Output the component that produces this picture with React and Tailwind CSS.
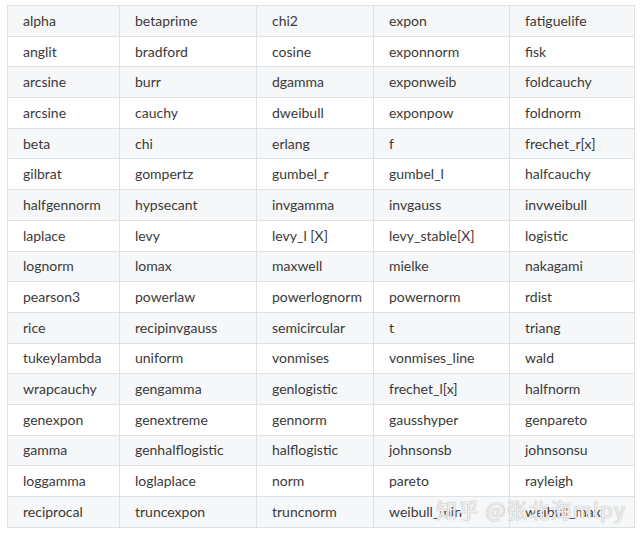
const rows = [
  ['alpha', 'betaprime', 'chi2', 'expon', 'fatiguelife'],
  ['anglit', 'bradford', 'cosine', 'exponnorm', 'fisk'],
  ['arcsine', 'burr', 'dgamma', 'exponweib', 'foldcauchy'],
  ['arcsine', 'cauchy', 'dweibull', 'exponpow', 'foldnorm'],
  ['beta', 'chi', 'erlang', 'f', 'frechet_r[x]'],
  ['gilbrat', 'gompertz', 'gumbel_r', 'gumbel_l', 'halfcauchy'],
  ['halfgennorm', 'hypsecant', 'invgamma', 'invgauss', 'invweibull'],
  ['laplace', 'levy', 'levy_l [X]', 'levy_stable[X]', 'logistic'],
  ['lognorm', 'lomax', 'maxwell', 'mielke', 'nakagami'],
  ['pearson3', 'powerlaw', 'powerlognorm', 'powernorm', 'rdist'],
  ['rice', 'recipinvgauss', 'semicircular', 't', 'triang'],
  ['tukeylambda', 'uniform', 'vonmises', 'vonmises_line', 'wald'],
  ['wrapcauchy', 'gengamma', 'genlogistic', 'frechet_l[x]', 'halfnorm'],
  ['genexpon', 'genextreme', 'gennorm', 'gausshyper', 'genpareto'],
  ['gamma', 'genhalflogistic', 'halflogistic', 'johnsonsb', 'johnsonsu'],
  ['loggamma', 'loglaplace', 'norm', 'pareto', 'rayleigh'],
  ['reciprocal', 'truncexpon', 'truncnorm', 'weibull_min', 'weibull_max'],
];

const widths = ['w-[112px]', 'w-[137px]', 'w-[117px]', 'w-[136px]', 'w-[125px]'];

export default function App() {
  return (
    <div className="relative w-[640px] h-[533px] bg-white pt-[5px] pl-[7px]" style={{ fontFamily: "Lato, 'Noto Sans', sans-serif" }}>
      <table className="table-fixed border-collapse text-[14px] text-[#3a3a3a]">
        <tbody>
          {rows.map((row, i) => (
            <tr key={i} className={i % 2 === 0 ? 'bg-[#f6f7f8]' : 'bg-white'}>
              {row.map((cell, j) => (
                <td
                  key={j}
                  className={`${widths[j]} h-[30.7px] border border-[#dfe2e5] pl-[15px] py-0 leading-none`}
                >
                  {cell}
                </td>
              ))}
            </tr>
          ))}
        </tbody>
      </table>

      {/* watermark */}
      <div
        className="absolute left-[436px] top-[494px] text-[21px] text-white/80 tracking-[1px]"
        style={{ fontFamily: "'Noto Sans CJK SC', 'Noto Sans', sans-serif", textShadow: '0 0 1px #b0b0b0, 0 0 1px #b0b0b0' }}
      >
        知乎 @张北海mlpy
      </div>
    </div>
  );
}
